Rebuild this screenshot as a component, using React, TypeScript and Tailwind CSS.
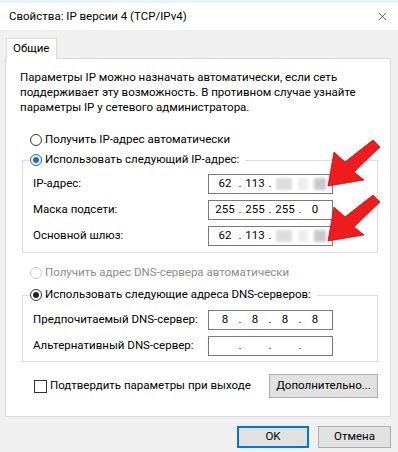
import { X } from "lucide-react";

type RadioProps = { checked?: boolean; disabled?: boolean; focus?: boolean };

function Radio({ checked, disabled, focus }: RadioProps) {
  const ring = disabled
    ? "border-[#cccccc]"
    : focus
      ? "border-[#1a5fb4]"
      : "border-[#333333]";
  return (
    <span
      className={`flex h-[12px] w-[12px] shrink-0 items-center justify-center rounded-full border bg-white ${ring}`}
    >
      {checked && (
        <span
          className={`h-[6px] w-[6px] rounded-full ${focus ? "bg-[#1a6fd0]" : "bg-[#222222]"}`}
        />
      )}
    </span>
  );
}

function Blurred() {
  // hidden part of the address, smeared out like in the screenshot
  return (
    <div className="flex h-[14px] w-[54px] items-center gap-[6px] pl-[3px] blur-[1.5px]">
      <div className="h-[12px] w-[16px] bg-[#dcdcdc]" />
      <div className="h-[12px] w-[10px] bg-[#ececec]" />
      <div className="h-[12px] w-[12px] bg-[#c9c9c9]" />
    </div>
  );
}

function IpField({ octets, hidden }: { octets: string[]; hidden?: boolean }) {
  return (
    <div className="flex h-[20px] w-[125px] items-center border border-[#7a7a7a] bg-white pl-[4px] leading-none text-black">
      <span className="w-[24px] text-center">{octets[0]}</span>
      <span className="w-[6px] text-center">.</span>
      <span className="w-[24px] text-center">{octets[1]}</span>
      <span className="w-[6px] text-center">.</span>
      {hidden ? (
        <Blurred />
      ) : (
        <>
          <span className="w-[24px] text-center">{octets[2]}</span>
          <span className="w-[6px] text-center">.</span>
          <span className="w-[24px] text-center">{octets[3]}</span>
        </>
      )}
    </div>
  );
}

function FieldRow({ label, children }: { label: string; children: React.ReactNode }) {
  return (
    <div className="flex h-[20px] items-center">
      <span className="w-[175px] whitespace-nowrap">{label}</span>
      {children}
    </div>
  );
}

function RedArrow({ className }: { className: string }) {
  return (
    <svg
      className={className}
      width="54"
      height="50"
      viewBox="0 0 54 50"
    >
      <polygon
        points="1,47 7,13 18,23 46,1 53,8 27,33 37,41"
        fill="#ee1c1c"
        stroke="#c40d0d"
        strokeWidth="0.8"
        strokeLinejoin="round"
      />
    </svg>
  );
}

export default function App() {
  return (
    <div className="relative flex h-[452px] w-[398px] flex-col overflow-hidden bg-[#f0f0f0] font-['Roboto','Noto_Sans',sans-serif] text-[11.5px] text-black">
      <div className="h-[3px] bg-[#e6f6fc]" />

      {/* Title bar */}
      <div className="flex h-[27px] items-center justify-between bg-white pl-[9px] pr-[9px]">
        <span>Свойства: IP версии 4 (TCP/IPv4)</span>
        <X className="h-[13px] w-[13px] text-[#222]" strokeWidth={1.2} />
      </div>

      <div className="flex flex-col px-[5px] pt-[8px]">
        {/* Tab */}
        <div className="relative z-10 -mb-px ml-[1px] flex h-[21px] w-[51px] items-center border border-b-0 border-[#d9d9d9] bg-white pl-[6px]">
          Общие
        </div>

        {/* Tab panel */}
        <div className="flex h-[359px] w-[386px] flex-col border border-[#d9d9d9] bg-white">
          <p className="pl-[14px] pt-[11px] leading-[15px]">
            Параметры IP можно назначать автоматически, если сеть
            <br />
            поддерживает эту возможность. В противном случае узнайте
            <br />
            параметры IP у сетевого администратора.
          </p>

          <label className="ml-[24px] mt-[17px] flex h-[16px] items-center gap-[3px]">
            <Radio />
            <span>Получить IP-адрес автоматически</span>
          </label>

          <fieldset className="ml-[16px] mt-[4px] w-[356px] border border-[#dcdcdc] pb-[6px]">
            <legend className="ml-[7px] pr-[6px]">
              <span className="flex h-[16px] items-center gap-[3px]">
                <Radio checked focus />
                <span>Использовать следующий IP-адрес:</span>
              </span>
            </legend>
            <div className="mt-[6px] flex flex-col gap-[6px] pl-[10px]">
              <FieldRow label="IP-адрес:">
                <IpField octets={["62", "113"]} hidden />
              </FieldRow>
              <FieldRow label="Маска подсети:">
                <IpField octets={["255", "255", "255", "0"]} />
              </FieldRow>
              <FieldRow label="Основной шлюз:">
                <IpField octets={["62", "113"]} hidden />
              </FieldRow>
            </div>
          </fieldset>

          <label className="ml-[24px] mt-[12px] flex h-[16px] items-center gap-[3px] text-[#8c8c8c]">
            <Radio disabled />
            <span>Получить адрес DNS-сервера автоматически</span>
          </label>

          <fieldset className="ml-[16px] mt-[6px] w-[356px] border border-[#dcdcdc] pb-[5px]">
            <legend className="ml-[7px] pr-[6px]">
              <span className="flex h-[16px] items-center gap-[3px]">
                <Radio checked />
                <span>Использовать следующие адреса DNS-серверов:</span>
              </span>
            </legend>
            <div className="mt-[7px] flex flex-col gap-[6px] pl-[10px]">
              <FieldRow label="Предпочитаемый DNS-сервер:">
                <IpField octets={["8", "8", "8", "8"]} />
              </FieldRow>
              <FieldRow label="Альтернативный DNS-сервер:">
                <IpField octets={["", "", "", ""]} />
              </FieldRow>
            </div>
          </fieldset>

          <div className="mt-[12px] flex h-[24px] items-center justify-between pl-[28px] pr-[12px]">
            <label className="flex items-center gap-[3px]">
              <span className="h-[13px] w-[13px] border border-[#333333] bg-white" />
              <span>Подтвердить параметры при выходе</span>
            </label>
            <button className="h-[24px] w-[109px] whitespace-nowrap border border-[#adadad] bg-[#e1e1e1]">
              Дополнительно...
            </button>
          </div>
        </div>

        {/* Dialog buttons */}
        <div className="mt-[9px] flex justify-end gap-[9px] pr-[2px]">
          <button className="h-[22px] w-[72px] border-2 border-[#0078d7] bg-[#e1e1e1]">
            OK
          </button>
          <button className="h-[22px] w-[73px] border border-[#adadad] bg-[#e1e1e1]">
            Отмена
          </button>
        </div>
      </div>

      <RedArrow className="absolute left-[327px] top-[139px]" />
      <RedArrow className="absolute left-[327px] top-[194px]" />
    </div>
  );
}
